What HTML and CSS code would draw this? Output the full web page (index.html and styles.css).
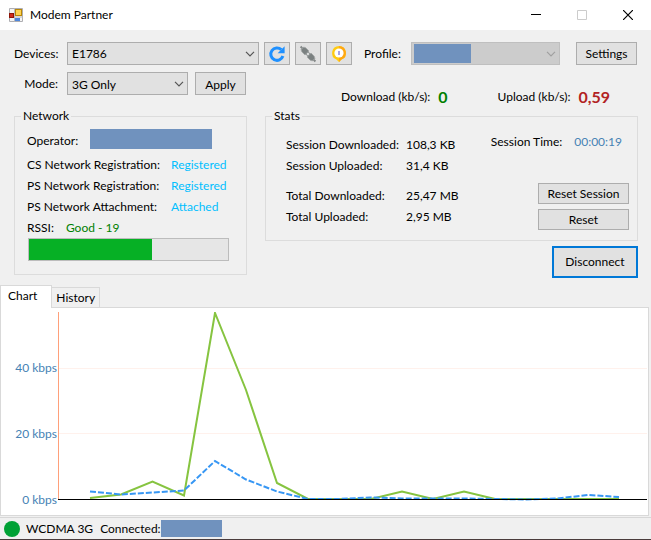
FILE: index.html
```html
<!DOCTYPE html>
<html lang="en">
<head>
<meta charset="utf-8">
<title>Modem Partner</title>
<link rel="stylesheet" href="styles.css">
</head>
<body>
<div class="window">
  <header class="titlebar">
    <svg class="app-icon" width="14" height="14" viewBox="0 0 14 14" aria-hidden="true">
      <path d="M0.500 .5h13v13H.5z" fill="#f4f4f4" stroke="#aeaeb2"/>
      <path d="M5.500 0v14M0 9h14" stroke="#b8b8bc"/>
      <rect x=".5" y="5.500" width="4" height="4" fill="#d02c1c" stroke="#8e1508"/>
      <rect x="6.500" y="1.500" width="6" height="6" fill="#fdd350" stroke="#b98708"/>
      <rect x="6" y="10" width="5" height="3" fill="#4e86dc"/>
    </svg>
    <h1>Modem Partner</h1>
    <div class="window-controls">
      <button type="button" aria-label="Minimize"><svg width="10" height="10" viewBox="0 0 10 10"><path d="M0 4.500h10" stroke="#000"/></svg></button>
      <button type="button" aria-label="Maximize" disabled><svg width="10" height="10" viewBox="0 0 10 10"><path d="M.5 .5h9v9h-9z" fill="none" stroke="#ccc"/></svg></button>
      <button type="button" aria-label="Close"><svg width="10" height="10" viewBox="0 0 10 10"><path d="M0 0l10 10M10 0L0 10" stroke="#000" stroke-width="1.200"/></svg></button>
    </div>
  </header>

  <main>
    <div class="toolbar">
      <label class="lead" for="devices">Devices:</label>
      <div class="combo combo-device">
        <select id="devices"><option>E1786</option></select>
        <svg class="chevron" width="10" height="6" viewBox="0 0 10 6"><path d="M1 .8l4 4 4-4"/></svg>
      </div>
      <div class="icon-group">
        <button class="btn icon-btn" type="button" aria-label="Refresh">
          <svg width="18" height="18" viewBox="0 0 18 18"><path d="M13.300 4.700A6.200 6.200 0 1 0 14.900 11" fill="none" stroke="#1e90ff" stroke-width="3"/><path d="M16.600 1.200v7h-7z" fill="#1e90ff"/></svg>
        </button>
        <button class="btn icon-btn" type="button" aria-label="Connection">
          <svg width="18" height="18" viewBox="0 0 18 18"><g transform="rotate(45 9 9)"><path d="M-1.500 9h4M15.500 9h4" stroke="#858989" stroke-width="2"/><path d="M1 7.200L3 6.200h4.500v5.600H3l-2-1zM17 7.200L15 6.200h-4.500v5.600H15l2-1z" fill="#7b8181" stroke="#a4a8a8" stroke-width=".8"/><path d="M7.500 7.500h3v3h-3z" fill="#e4e6e6" stroke="#8c9191"/></g></svg>
        </button>
        <button class="btn icon-btn" type="button" aria-label="Information">
          <svg width="18" height="18" viewBox="0 0 18 18"><path d="M9 1a7 7 0 0 1 2.500 13.500L9 17l-2.500-2.500A7 7 0 0 1 9 1z" fill="#ffcb12"/><path d="M9 1a7 7 0 0 1 2.500 13.500L9 17z" fill="#ffa812"/><circle cx="9" cy="8" r="4.600" fill="#fff"/><path d="M9 6v4" stroke="#a7a4e8" stroke-width="2"/></svg>
        </button>
      </div>
      <label class="profile-label" for="profile">Profile:</label>
      <div class="combo combo-profile">
        <select id="profile" disabled><option></option></select>
        <span class="mask profile-mask"></span>
        <svg class="chevron" width="10" height="6" viewBox="0 0 10 6"><path d="M1 .8l4 4 4-4"/></svg>
      </div>
      <button class="btn settings" type="button">Settings</button>
    </div>

    <div class="toolbar mode-row">
      <label class="lead" for="mode">Mode:</label>
      <div class="combo combo-mode">
        <select id="mode"><option>3G Only</option></select>
        <svg class="chevron" width="10" height="6" viewBox="0 0 10 6"><path d="M1 .8l4 4 4-4"/></svg>
      </div>
      <button class="btn apply" type="button">Apply</button>
      <div class="rates">
        <p class="rate">Download (kb/s): <strong class="down">0</strong></p>
        <p class="rate">Upload (kb/s): <strong class="up">0,59</strong></p>
      </div>
    </div>

    <div class="panels">
      <fieldset class="network">
        <legend>Network</legend>
        <div class="operator"><span>Operator:</span><span class="mask operator-mask"></span></div>
        <dl class="network-list">
          <dt>CS Network Registration:</dt><dd>Registered</dd>
          <dt>PS Network Registration:</dt><dd>Registered</dd>
          <dt>PS Network Attachment:</dt><dd>Attached</dd>
        </dl>
        <div class="signal"><label for="rssi">RSSI:</label><span class="quality">Good - 19</span></div>
        <progress id="rssi" max="100" value="62"></progress>
      </fieldset>

      <div class="right">
        <fieldset class="stats">
          <legend>Stats</legend>
          <div class="totals">
            <dl class="stats-list">
              <dt>Session Downloaded:</dt><dd>108,3 KB</dd>
              <dt>Session Uploaded:</dt><dd>31,4 KB</dd>
            </dl>
            <dl class="stats-list">
              <dt>Total Downloaded:</dt><dd>25,47 MB</dd>
              <dt>Total Uploaded:</dt><dd>2,95 MB</dd>
            </dl>
          </div>
          <div class="session">
            <p class="session-time"><span>Session Time:</span><time>00:00:19</time></p>
            <div class="resets">
              <button class="btn" type="button">Reset Session</button>
              <button class="btn" type="button">Reset</button>
            </div>
          </div>
        </fieldset>
        <button class="btn disconnect" type="button">Disconnect</button>
      </div>
    </div>
  </main>

  <section class="tabs">
    <div class="tab-list" role="tablist">
      <button class="tab active" type="button" role="tab" aria-selected="true">Chart</button>
      <button class="tab" type="button" role="tab" aria-selected="false">History</button>
    </div>
    <div class="chart" role="tabpanel">
      <div class="axis"><span>40 kbps</span><span>20 kbps</span><span>0 kbps</span></div>
      <svg class="plot" viewBox="0 0 589 189" preserveAspectRatio="none" role="img" aria-label="Transfer rate">
        <path d="M0 56.500h589M0 121.500h589" stroke="#fff1ec"/>
        <path d="M.5 0v187" stroke="#ffa07a"/>
        <polyline points="32,186 63,182.500 94.500,169.500 126,183.500 157,1 188,78 219,171 250,187 313,187 344,179.500 375,187 406,179.500 437,187 561,187" fill="none" stroke="#86c440" stroke-width="2"/>
        <polyline points="32,179.500 63,182.500 94.500,180.500 126,178.500 157,149 188,167.500 219,179.500 250,187 281,187 312,185.500 344,186.500 375,186.500 406,186.500 437,187 468,187.500 499,186.500 530,183 561,185" fill="none" stroke="#3797f4" stroke-width="2" stroke-dasharray="6 2"/>
        <path d="M0 187.500h589" stroke="#000"/>
      </svg>
    </div>
  </section>

  <footer class="statusbar">
    <span class="dot"></span>
    <span>WCDMA 3G</span>
    <span class="connected">Connected:<span class="mask status-mask"></span></span>
  </footer>
</div>
</body>
</html>
```
FILE: styles.css
```css
* { box-sizing: border-box; }

body, h1, p, dl, dd, fieldset { margin: 0; padding: 0; }

body {
  background: #f0f0f0;
  color: #000;
  font: 12px/16px Lato, "Open Sans", sans-serif;
}

button, select { font: inherit; color: inherit; }

.window { display: flex; flex-direction: column; min-height: 100vh; }

.titlebar { display: flex; align-items: center; height: 30px; padding-left: 9px; background: #fff; }
.titlebar h1 { margin-left: 7px; font-size: 12px; font-weight: 400; }
.window-controls { display: flex; align-self: stretch; margin-left: auto; }
.window-controls button { width: 46px; padding: 0; border: 0; background: none; }
.window-controls svg { display: block; margin: 0 auto; }

main { padding: 12px 13px 7px 14px; }

.toolbar { display: flex; align-items: center; padding-right: 1px; }
.lead { width: 53px; padding-right: 9px; text-align: right; white-space: nowrap; }

.combo { position: relative; height: 23px; }
.combo select {
  display: block;
  width: 100%;
  height: 100%;
  padding: 0 4px;
  border: 1px solid #adadad;
  border-radius: 0;
  background: #e1e1e1;
  appearance: none;
}
.combo select:disabled { border-color: #bfbfbf; background: #ccc; opacity: 1; }
.chevron { position: absolute; top: 9px; right: 4px; fill: none; stroke: #555; stroke-width: 1.2; pointer-events: none; }
.combo-profile .chevron { stroke: #a0a0a0; }
.combo-device { flex: 1; }
.combo-profile { width: 149px; }
.combo-mode { width: 121px; }

.mask { display: block; background: #7092be; }
.profile-mask { position: absolute; top: 2px; left: 3px; width: 57px; height: 19px; }

.btn { height: 23px; padding: 0; border: 1px solid #adadad; background: #e1e1e1; white-space: nowrap; }
.icon-group { display: flex; gap: 5px; margin-left: 5px; }
.icon-btn { display: flex; align-items: center; justify-content: center; width: 26px; }
.profile-label { width: 59px; padding-left: 12px; white-space: nowrap; }
.settings { width: 61px; margin-left: 16px; }

.mode-row { margin-top: 7px; align-items: flex-start; line-height: 23px; }
.apply { width: 51px; margin-left: 7px; }
.rates { display: flex; flex: 1; justify-content: flex-end; gap: 50px; padding: 13px 27px 0 0; }
.rate { display: flex; gap: 8px; white-space: nowrap; }
.rate strong { font-size: 16px; font-weight: 700; }
.down { color: #008000; }
.up { color: #b22222; }

.panels { display: flex; align-items: flex-start; gap: 18px; }
fieldset { min-width: 0; border: 1px solid #dcdcdc; }
legend { padding: 0 2px; }

.network { flex: none; width: 233px; padding: 4px 17px 13px 12px; }
.network legend { margin-left: -6px; }
.operator { display: flex; align-items: flex-start; line-height: 26px; }
.operator span:first-child { width: 63px; }
.operator-mask { width: 122px; height: 20px; margin-top: 1px; }
.network-list { display: grid; grid-template-columns: 144px 1fr; line-height: 21px; white-space: nowrap; }
.network-list dd { color: #00bfff; }
.signal { display: flex; gap: 12px; line-height: 21px; }
.quality { color: #008000; }
progress {
  display: block;
  width: 201px;
  height: 23px;
  margin-left: 1px;
  border: 1px solid #bcbcbc;
  background: #e6e6e6;
  appearance: none;
}
progress::-webkit-progress-bar { background: #e6e6e6; }
progress::-webkit-progress-value { background: #06b025; }

.right { display: flex; flex: 1; flex-direction: column; align-items: flex-end; gap: 5px; }
.stats { width: 100%; padding: 7px 8px 10px 20px; }
.stats legend { margin-left: -14px; }
.totals { float: left; display: grid; gap: 9px; padding-top: 3px; }
.stats-list { display: grid; grid-template-columns: 120px auto; line-height: 21px; white-space: nowrap; }
.session { display: flex; flex-direction: column; align-items: flex-end; gap: 31px; }
.session-time { display: flex; gap: 12px; padding-right: 7px; line-height: 21px; }
.session-time time { color: #4682b4; }
.resets { display: grid; gap: 5px; width: 91px; }
.resets .btn { height: 21px; }
.disconnect { width: 86px; height: 32px; border: 2px solid #0078d7; }

.tabs { display: flex; flex: 1; flex-direction: column; padding-right: 2px; }
.tab-list { display: flex; align-items: flex-end; }
.tab { height: 20px; padding: 0 4px; border: 1px solid #d9d9d9; border-bottom: 0; border-left: 0; background: #f0f0f0; }
.tab.active { position: relative; height: 23px; margin-bottom: -1px; padding: 0 14px 2px 7px; border-left: 1px solid #d9d9d9; background: #fff; }

.chart { display: flex; flex: 1; align-items: flex-start; padding: 4px 1px 14px 0; border: 1px solid #d9d9d9; background: #fff; }
.axis { display: flex; flex: none; flex-direction: column; justify-content: space-between; width: 57px; height: 196px; margin-bottom: -7px; padding: 48px 1px 0 0; color: #4682b4; text-align: right; }
.plot { flex: 1; min-width: 0; height: 189px; }
.plot * { vector-effect: non-scaling-stroke; }

.statusbar { display: flex; align-items: center; height: 23px; margin-top: 1px; padding-left: 4px; border-top: 1px solid #d7d7d7; border-bottom: 1px solid #4a3c3c; }
.dot { width: 16px; height: 16px; margin-right: 6px; border-radius: 50%; background: #00a135; }
.connected { display: flex; align-items: center; margin-left: 7px; }
.status-mask { width: 61px; height: 17px; }
```
